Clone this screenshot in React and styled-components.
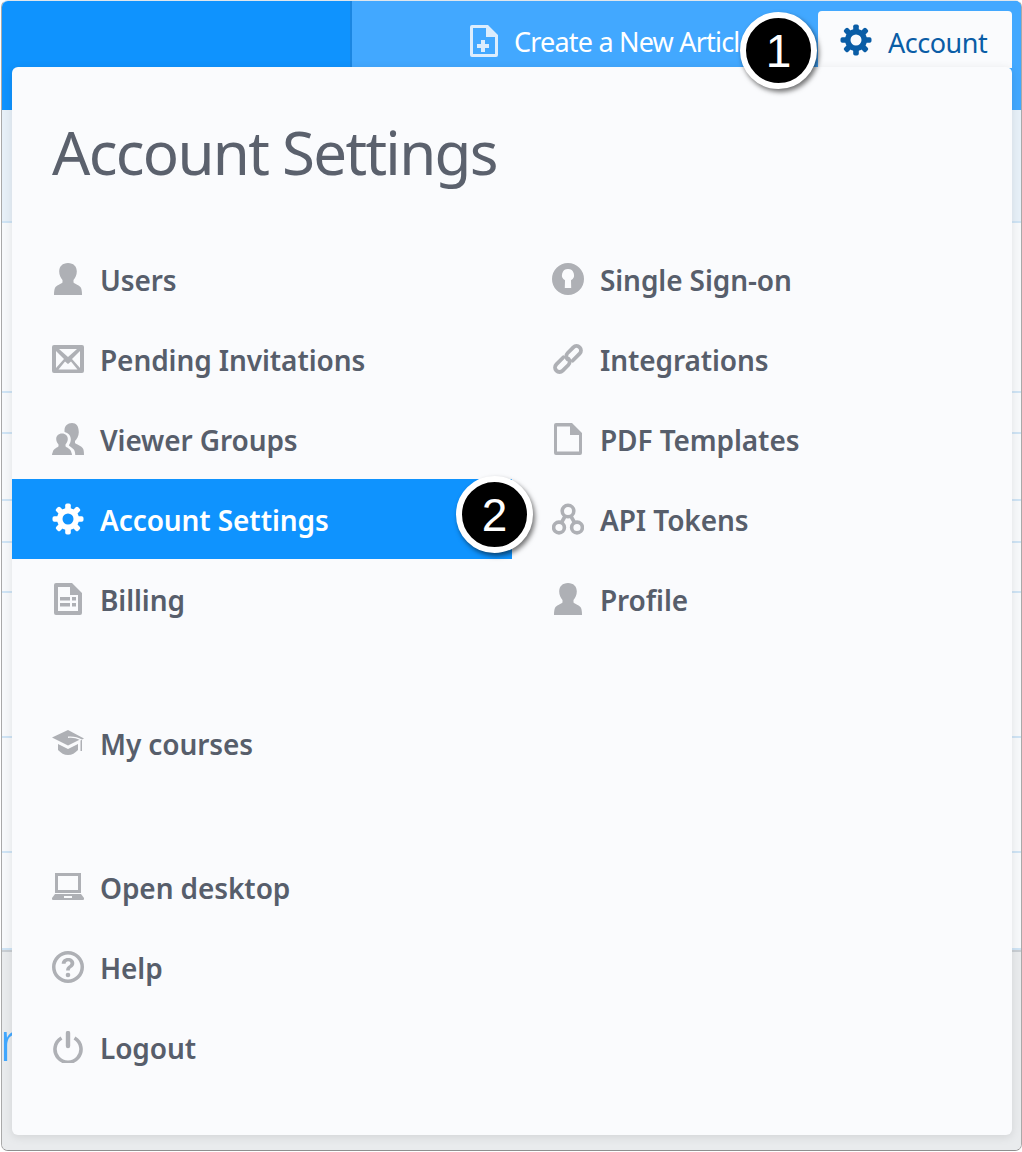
import React from 'react';
import styled, { createGlobalStyle } from 'styled-components';

const GlobalStyle = createGlobalStyle`
  html, body {
    margin: 0;
    padding: 0;
    background: #fff;
    font-family: "Noto Sans", "Open Sans", sans-serif;
  }
`;

const Window = styled.div`
  position: relative;
  box-sizing: border-box;
  width: 1021px;
  height: 1151px;
  margin-left: 1px;
  border: 1px solid #a9a9a9;
  border-top-color: #dfe6ec;
  border-bottom-color: #8f8f8f;
  border-radius: 7px;
  overflow: hidden;
  display: flex;
  flex-direction: column;
  background: #f7f9fb;
`;

const Header = styled.header`
  display: flex;
  flex: 0 0 109px;
  background: #0f93fe;
`;

const Logo = styled.div`
  flex: 0 0 348px;
`;

const Nav = styled.nav`
  flex: 1;
  display: flex;
  align-items: flex-start;
  justify-content: flex-end;
  padding: 10px 9px 0 0;
  background: #42a8ff;
  border-left: 2px solid #1a86e2;
`;

const CreateLink = styled.a`
  display: flex;
  align-items: center;
  gap: 16px;
  width: 348px;
  height: 56px;
  margin-top: 2px;
  color: #fff;
  font-size: 27px;
  letter-spacing: -0.8px;
  white-space: nowrap;
  overflow: hidden;
`;

const AccountTab = styled.a`
  display: flex;
  align-items: center;
  gap: 16px;
  box-sizing: border-box;
  width: 194px;
  height: 57px;
  padding: 0 0 0 22px;
  border-radius: 4px 4px 0 0;
  background: #fafbfd;
  color: #0a5da6;
  font-size: 27px;
  letter-spacing: -0.5px;
`;

const AccountLabel = styled.span`
  padding-top: 5px;
`;

const Content = styled.div`
  flex: 1;
  display: flex;
  flex-direction: column;
`;

const Row = styled.div`
  flex: 0 0 ${p => p.$height}px;
  box-sizing: border-box;
  border-bottom: 2px solid #cfe4f5;
  background: ${p => (p.$tinted ? '#e7f0f8' : 'transparent')};
`;

const Footer = styled.footer`
  flex: 1;
  box-sizing: border-box;
  padding-top: 52px;
  background: #e9ebed;
  border-top: 2px solid #c9ced3;
  color: #42a8ff;
  font-size: 56px;
  font-weight: 300;
  line-height: 70px;
  text-indent: -3px;
`;

const Panel = styled.section`
  position: absolute;
  top: 66px;
  left: 10px;
  box-sizing: border-box;
  width: 1000px;
  height: 1068px;
  border-radius: 6px;
  background: #fafbfd;
  box-shadow: 0 2px 10px rgba(0, 0, 0, 0.1);
`;

const Title = styled.h1`
  margin: 0;
  padding: 44px 0 0 40px;
  height: 172px;
  box-sizing: border-box;
  color: #5b616d;
  font-size: 60px;
  font-weight: 400;
  line-height: 82px;
  letter-spacing: -1.7px;
`;

const Columns = styled.div`
  display: grid;
  grid-template-columns: 500px 500px;
`;

const Group = styled.ul`
  margin: 0 0 ${p => p.$gap || 0}px;
  padding: 0;
  list-style: none;
`;

const Item = styled.li`
  display: flex;
  align-items: center;
  gap: 16px;
  box-sizing: border-box;
  height: 80px;
  padding-left: 40px;
  background: ${p => (p.$active ? '#0f93fe' : 'transparent')};
  color: ${p => (p.$active ? '#fff' : '#575e6b')};
  font-size: 28px;
  font-weight: 600;
  letter-spacing: -0.1px;
  white-space: nowrap;
`;

const ItemLabel = styled.span`
  padding-top: 1px;
`;

const IconBox = styled.span`
  flex: 0 0 32px;
  display: flex;
  width: 32px;
  height: 32px;
  color: ${p => (p.$active ? '#fff' : '#aeb0b5')};

  svg {
    display: block;
    width: 32px;
    height: 32px;
    fill: currentColor;
  }
`;

const Callout = styled.div`
  position: absolute;
  top: ${p => p.$top}px;
  left: ${p => p.$left}px;
  box-sizing: border-box;
  display: flex;
  align-items: center;
  justify-content: center;
  width: 77px;
  height: 77px;
  border: 6px solid #fff;
  border-radius: 50%;
  background: #000;
  box-shadow: 2px 3px 5px rgba(0, 0, 0, 0.55);
  color: #fff;
  font-family: "Liberation Sans", Arial, sans-serif;
  font-size: 46px;
  line-height: 1;
`;

const Gear = () => {
  const teeth = [0, 45, 90, 135, 180, 225, 270, 315];
  return (
    <svg viewBox="0 0 32 32">
      {teeth.map(a => (
        <rect key={a} x="13.2" y="0.5" width="5.6" height="7" rx="1.8" transform={`rotate(${a} 16 16)`} />
      ))}
      <path fillRule="evenodd" d="M16 5a11 11 0 1 0 0 22 11 11 0 0 0 0-22zm0 5.500a5.500 5.500 0 1 1 0 11 5.500 5.500 0 0 1 0-11z" />
    </svg>
  );
};

const Person = () => (
  <svg viewBox="0 0 32 32">
    <path d="M16 0c-5.500 0-8.800 3.500-8.800 8.500 0 3.500 1.500 6.500 3.300 8.500v2.500c-1 1.500-6 2.500-7.300 5C2.200 26.500 2 29 2 32h28c0-3-.2-5.500-1.200-7.500-1.300-2.500-6.300-3.500-7.300-5V17c1.800-2 3.300-5 3.300-8.500C24.800 3.500 21.500 0 16 0z" />
  </svg>
);

const Envelope = () => (
  <svg viewBox="0 0 32 32">
    <path fillRule="evenodd" d="M2 2h28a2 2 0 0 1 2 2v24a2 2 0 0 1-2 2H2a2 2 0 0 1-2-2V4a2 2 0 0 1 2-2zm5 4l9 8 9-8zM4 8v17l8-9zm24 0l-8 8 8 9zM6.500 26.500h19L19 18.500 16 21l-3-2.500z" />
  </svg>
);

const People = () => (
  <svg viewBox="0 0 32 32">
    <path d="M20 0c-4.400 0-7.500 3-7.500 7.200 0 .6 0 1.200.1 1.700 3.600.8 6.200 3.500 6.200 7.300 0 2.200-.8 4.400-2 6 .3 1 3.500 2.200 5 4.300.9 1.300 1.300 3 1.500 5.500H32c0-3-.3-5-.9-6.300-1.300-3-7.300-4.400-8.100-5.700v-2c1.700-1.700 3.800-4.800 3.800-8.800C26.800 3 24.200 0 20 0z" />
    <path d="M10 10.500c-3.500 0-5.800 2.400-5.800 5.500 0 2.200 1 4 2.300 5.500v1.700c-.8 1.200-4.500 2.200-5.500 5C.5 29.800 0 31 0 32h20c0-1-.5-2.200-1-3.800-1-2.800-4.700-3.800-5.500-5v-1.700c1.300-1.500 2.300-3.300 2.300-5.500 0-3.100-2.300-5.500-5.800-5.500z" />
  </svg>
);

const Invoice = () => (
  <svg viewBox="0 0 32 32">
    <path fillRule="evenodd" d="M4 0h16l10 10v20a2 2 0 0 1-2 2H4a2 2 0 0 1-2-2V2a2 2 0 0 1 2-2zm2 4v24h20V12h-8V4zM8 14h10v3.500H8zm12 0h4v3.500h-4zM8 20h10v3.500H8zm12 0h4v3.500h-4z" />
  </svg>
);

const Cap = () => (
  <svg viewBox="0 0 32 32">
    <path d="M16 3 0 10.500l16 8 11.500-5.700c-3.500-1.700-7.500-2.400-11.500-1.800v-1.500c5-.5 10 .5 14 3l2-1z" />
    <path d="M28.500 13.500l1.500-.8V24h-1.500z" />
    <path d="M6 17l10 5 10-5v6c-3 3-6 5-10 5s-7-2-10-5z" />
  </svg>
);

const Laptop = () => (
  <svg viewBox="0 0 32 32">
    <path fillRule="evenodd" d="M3 2h26v20H3zm3 3v14h20V5zM3 23h26l3 4v1a1 1 0 0 1-1 1H1a1 1 0 0 1-1-1v-1zm9 2v2h8v-2z" />
  </svg>
);

const Help = () => (
  <svg viewBox="0 0 32 32">
    <path fillRule="evenodd" d="M16 0a16 16 0 1 1 0 32 16 16 0 0 1 0-32zm0 3.500a12.500 12.500 0 1 0 0 25 12.500 12.500 0 0 0 0-25z" />
    <path d="M16 7c3.700 0 6.300 2 6.300 5.200 0 2.300-1.300 3.500-2.800 4.600-1.300.9-1.700 1.400-1.700 2.700h-3.700c0-2.300.8-3.500 2.500-4.700 1.200-.9 1.900-1.400 1.900-2.500 0-1.200-.9-2-2.300-2-1.500 0-2.500.9-2.600 2.500H9.700C9.900 9.200 12.300 7 16 7z" />
    <circle cx="16" cy="24" r="2.300" />
  </svg>
);

const Power = () => (
  <svg viewBox="0 0 32 32">
    <g fill="none" stroke="currentColor" strokeLinecap="round">
      <path d="M16 2v13" strokeWidth="4.400" />
      <path d="M9.500 7A13 13 0 1 0 22.500 7" strokeWidth="3.600" strokeLinecap="butt" />
    </g>
  </svg>
);

const Keyhole = () => (
  <svg viewBox="0 0 32 32">
    <path fillRule="evenodd" d="M16 0a16 16 0 1 1 0 32 16 16 0 0 1 0-32zm0 6a6 6 0 0 0-3 11.200L12.800 25h6.400l-.2-7.800A6 6 0 0 0 16 6z" />
  </svg>
);

const Chain = () => (
  <svg viewBox="0 0 32 32">
    <g fill="none" stroke="currentColor" strokeWidth="3.800" strokeLinecap="round" transform="rotate(-45 16 16)">
      <path d="M14 11.500H4a4.500 4.500 0 0 0 0 9h8a4.500 4.500 0 0 0 4.500-4.500" />
      <path d="M18 20.500H28a4.500 4.500 0 0 0 0-9h-8a4.500 4.500 0 0 0-4.500 4.500" />
    </g>
  </svg>
);

const Page = () => (
  <svg viewBox="0 0 32 32">
    <path fillRule="evenodd" d="M4 0h16l10 10v20a2 2 0 0 1-2 2H4a2 2 0 0 1-2-2V2a2 2 0 0 1 2-2zm1 3.500v25h22V12h-9V3.500z" />
  </svg>
);

const Nodes = () => (
  <svg viewBox="0 0 32 32">
    <g fill="none" stroke="currentColor" strokeWidth="3.600">
      <circle cx="16" cy="8" r="5.800" />
      <circle cx="7" cy="24.500" r="5.400" />
      <circle cx="25" cy="24.500" r="5.400" />
      <path d="M13.200 13 9.500 19.500M18.800 13l3.700 6.500" />
    </g>
  </svg>
);

const NewDoc = () => (
  <svg viewBox="0 0 28 32">
    <path
      fillRule="evenodd"
      fill="#dcedfd"
      d="M2 0h16l10 10v20a2 2 0 0 1-2 2H2a2 2 0 0 1-2-2V2a2 2 0 0 1 2-2zm1 3v26h22V12h-9V3zm8 12h4v4h4v4h-4v4h-4v-4H7v-4h4z"
    />
  </svg>
);

const DocIcon = styled.span`
  flex: 0 0 28px;
  display: flex;

  svg {
    width: 28px;
    height: 32px;
  }
`;

const TabIcon = styled.span`
  flex: 0 0 32px;
  display: flex;

  svg {
    width: 32px;
    height: 32px;
    fill: currentColor;
  }
`;

const backgroundRows = [
  { height: 113, tinted: true },
  { height: 170 },
  { height: 41 },
  { height: 67 },
  { height: 42 },
  { height: 50 },
  { height: 145 },
  { height: 115 },
  { height: 97 },
];

const leftGroups = [
  {
    gap: 64,
    items: [
      { label: 'Users', icon: Person },
      { label: 'Pending Invitations', icon: Envelope },
      { label: 'Viewer Groups', icon: People },
      { label: 'Account Settings', icon: Gear, active: true },
      { label: 'Billing', icon: Invoice },
    ],
  },
  { gap: 64, items: [{ label: 'My courses', icon: Cap }] },
  {
    items: [
      { label: 'Open desktop', icon: Laptop },
      { label: 'Help', icon: Help },
      { label: 'Logout', icon: Power },
    ],
  },
];

const rightItems = [
  { label: 'Single Sign-on', icon: Keyhole },
  { label: 'Integrations', icon: Chain },
  { label: 'PDF Templates', icon: Page },
  { label: 'API Tokens', icon: Nodes },
  { label: 'Profile', icon: Person },
];

const MenuItem = ({ label, icon: Icon, active }) => (
  <Item $active={active}>
    <IconBox $active={active}>
      <Icon />
    </IconBox>
    <ItemLabel>{label}</ItemLabel>
  </Item>
);

export default function App() {
  return (
    <>
      <GlobalStyle />
      <Window>
        <Header>
          <Logo />
          <Nav>
            <CreateLink>
              <DocIcon>
                <NewDoc />
              </DocIcon>
              Create a New Article
            </CreateLink>
            <AccountTab>
              <TabIcon>
                <Gear />
              </TabIcon>
              <AccountLabel>Account</AccountLabel>
            </AccountTab>
          </Nav>
        </Header>
        <Content>
          {backgroundRows.map((row, i) => (
            <Row key={i} $height={row.height} $tinted={row.tinted} />
          ))}
          <Footer>r</Footer>
        </Content>
        <Panel>
          <Title>Account Settings</Title>
          <Columns>
            <div>
              {leftGroups.map((group, i) => (
                <Group key={i} $gap={group.gap}>
                  {group.items.map(item => (
                    <MenuItem key={item.label} {...item} />
                  ))}
                </Group>
              ))}
            </div>
            <Group>
              {rightItems.map(item => (
                <MenuItem key={item.label} {...item} />
              ))}
            </Group>
          </Columns>
        </Panel>
        <Callout $top={11} $left={738}>1</Callout>
        <Callout $top={475} $left={454}>2</Callout>
      </Window>
    </>
  );
}
